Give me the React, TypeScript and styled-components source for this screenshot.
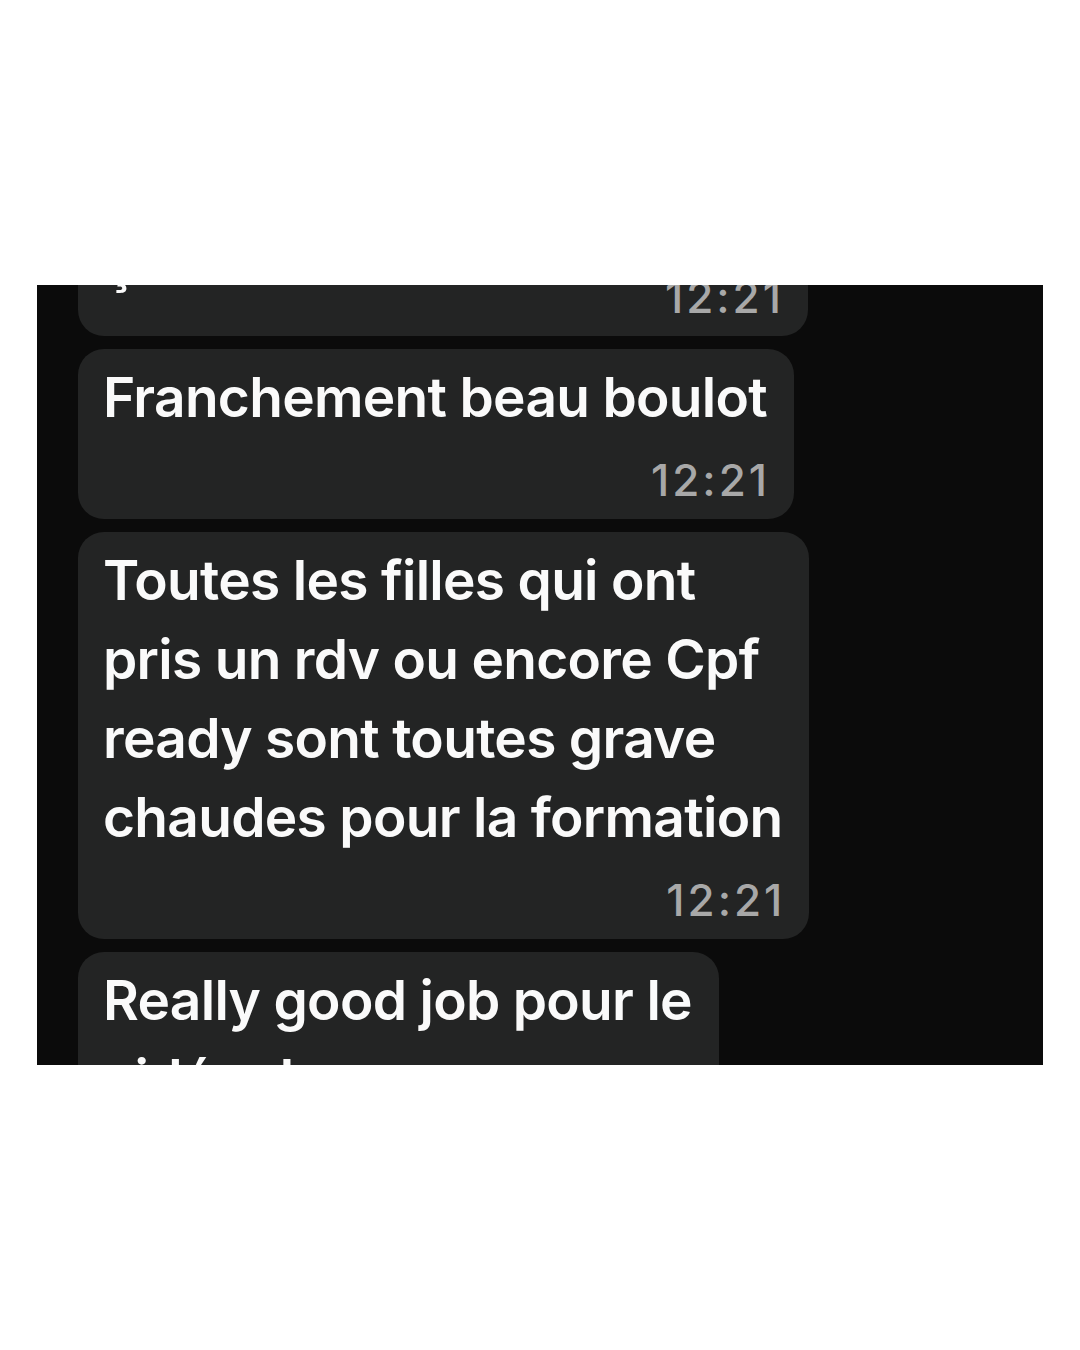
import { createGlobalStyle, styled } from "styled-components";

const GlobalStyle = createGlobalStyle`
    html, body {
        margin: 0;
        padding: 0;
        background: #ffffff;
    }
    body {
        font-family: Inter, "Liberation Sans", sans-serif;
        -webkit-font-smoothing: antialiased;
    }
`;

const Page = styled.div`
    width: 1080px;
    height: 1350px;
    box-sizing: border-box;
    padding: 285px 0 0 37px;
    background: #ffffff;
`;

const Screen = styled.div`
    width: 1006px;
    height: 780px;
    background: #0b0b0b;
    overflow: hidden;
    padding-left: 41px;
    box-sizing: border-box;
`;

// the conversation is scrolled, first bubble is half out of view
const Thread = styled.div`
    display: flex;
    flex-direction: column;
    align-items: flex-start;
    gap: 13px;
    margin-top: -150px;
`;

const Bubble = styled.div<{ $minWidth?: number }>`
    background: #232424;
    border-radius: 26px;
    padding: 8.5px 27px 15px 25px;
    min-width: ${(p) => (p.$minWidth ? `${p.$minWidth}px` : "0")};
    box-sizing: border-box;
    display: flex;
    flex-direction: column;
`;

const Line = styled.div`
    color: #fafafa;
    font-size: 55px;
    font-weight: 600;
    line-height: 79px;
    letter-spacing: -0.7px;
    white-space: nowrap;
`;

const LastRow = styled.div`
    display: flex;
    align-items: flex-end;
    justify-content: space-between;
    gap: 20px;

    ${Line} {
        margin-bottom: 19.5px;
    }
`;

const Time = styled.div`
    align-self: flex-end;
    color: #a8a8a8;
    font-size: 44px;
    font-weight: 500;
    line-height: 48px;
    letter-spacing: 3px;
    margin-top: 19.5px;
    margin-right: -3px;

    ${LastRow} & {
        margin-top: 0;
    }
`;

type Message = {
    lines: string[];
    time: string;
    inlineTime?: boolean;
    minWidth?: number;
};

const messages: Message[] = [
    {
        lines: ["Merci beaucoup pour tout", "ça"],
        time: "12:21",
        inlineTime: true,
        minWidth: 730,
    },
    { lines: ["Franchement beau boulot"], time: "12:21" },
    {
        lines: [
            "Toutes les filles qui ont",
            "pris un rdv ou encore Cpf",
            "ready sont toutes grave",
            "chaudes pour la formation",
        ],
        time: "12:21",
    },
    { lines: ["Really good job pour le", "vidéo de promo"], time: "12:21" },
];

const MessageBubble = ({ lines, time, inlineTime, minWidth }: Message) => {
    if (inlineTime) {
        const head = lines.slice(0, -1);
        const last = lines[lines.length - 1];
        return (
            <Bubble $minWidth={minWidth}>
                {head.map((l, i) => (
                    <Line key={i}>{l}</Line>
                ))}
                <LastRow>
                    <Line>{last}</Line>
                    <Time>{time}</Time>
                </LastRow>
            </Bubble>
        );
    }
    return (
        <Bubble $minWidth={minWidth}>
            {lines.map((l, i) => (
                <Line key={i}>{l}</Line>
            ))}
            <Time>{time}</Time>
        </Bubble>
    );
};

const App = () => {
    return (
        <>
            <GlobalStyle />
            <Page>
                <Screen>
                    <Thread>
                        {messages.map((m, i) => (
                            <MessageBubble key={i} {...m} />
                        ))}
                    </Thread>
                </Screen>
            </Page>
        </>
    );
};

export default App;
